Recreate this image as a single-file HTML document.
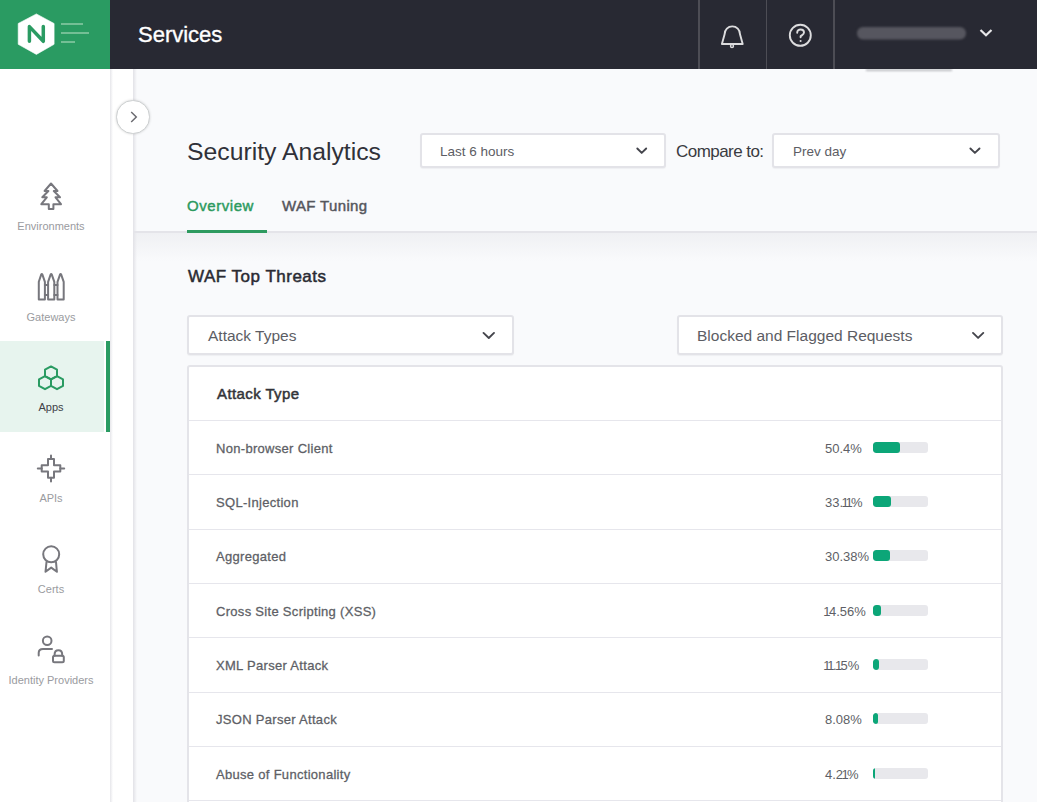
<!DOCTYPE html>
<html><head><meta charset="utf-8">
<style>
*{box-sizing:border-box;margin:0;padding:0}
html,body{width:1037px;height:802px;overflow:hidden;background:#f9fafc;font-family:"Liberation Sans",sans-serif}
.abs{position:absolute}
#hdr{left:0;top:0;width:1037px;height:69px;background:#282933}
#logo{left:0;top:0;width:110px;height:69px;background:#2a9b62}
.t{position:absolute;white-space:nowrap;line-height:1}
#side{left:0;top:69px;width:110px;height:733px;background:#fff}
#sideb{left:110px;top:69px;width:3px;height:733px;background:linear-gradient(90deg,#e6e6ea,#fff)}
#strip{left:113px;top:69px;width:20px;height:733px;background:#fff}
#content{left:133px;top:69px;width:904px;height:733px;background:#f9fafc}
#cshadow{left:133px;top:69px;width:4px;height:733px;background:linear-gradient(90deg,#e2e2e7,rgba(249,250,252,0))}
.nav{position:absolute;left:0;width:110px;height:91px}
.nav .lbl{position:absolute;left:0;width:102px;text-align:center;font-size:11px;color:#9a9ba0;line-height:1}
.dd{position:absolute;background:#fff;border:2px solid #e3e3e8;border-radius:3px;box-shadow:0 1px 1px rgba(40,40,60,0.05)}
.row{position:absolute;left:0;width:812px;height:54.5px;border-top:1.5px solid #e6e6ec}
.row .nm{position:absolute;left:27px;font-size:13px;letter-spacing:0.3px;color:#5e5f66;line-height:1;-webkit-text-stroke:0.28px #5e5f66}
.row .pc{position:absolute;left:636px;font-size:13px;color:#5e5f66;line-height:1}
.row .pc u{text-decoration:none;margin:0 -1.65px}
.row .bar{position:absolute;left:684px;width:55px;height:11px;border-radius:3px;background:#e8e8ec;overflow:hidden}
.row .bar i{display:block;height:11px;background:#0ca678;border-radius:3px}
</style></head><body>
<div id="hdr" class="abs"></div>
<div id="logo" class="abs">
<svg width="110" height="69" viewBox="0 0 110 69">
<path d="M36.4 13.9 L54.1 23.5 L54.1 44.3 L36.4 54.4 L18.2 44.3 L18.2 23.5 Z" fill="#fff" stroke="#fff" stroke-width="0.6" stroke-linejoin="round"/>
<path d="M29.4 41.3 V26.6 L43.3 41.3 V26.6" fill="none" stroke="#2a9b62" stroke-width="3.5" stroke-linecap="round" stroke-linejoin="round"/>
<g stroke="#94cfad" stroke-width="1.4">
<line x1="61" y1="24" x2="83" y2="24"/>
<line x1="61" y1="33" x2="89" y2="33"/>
<line x1="61" y1="42" x2="75" y2="42"/>
</g>
</svg>
</div>
<div class="t" style="left:138px;top:24px;font-size:22px;color:#fff;-webkit-text-stroke:0.35px #fff">Services</div>
<div class="abs" style="left:698px;top:0;width:1.5px;height:69px;background:#4d4d55"></div>
<div class="abs" style="left:765.5px;top:0;width:1.5px;height:69px;background:#4d4d55"></div>
<div class="abs" style="left:833px;top:0;width:1.5px;height:69px;background:#4d4d55"></div>
<svg class="abs" style="left:0;top:0" width="1037" height="69">
<path d="M721.9 44 L724.6 34.2 C724.6 29.6 728 26.4 732.3 26.4 C736.6 26.4 740 29.6 740 34.2 L742.7 44 Z" fill="none" stroke="#dcdcde" stroke-width="1.9" stroke-linejoin="round"/>
<circle cx="732" cy="46" r="1.5" fill="none" stroke="#dcdcde" stroke-width="1.4"/>
<circle cx="800.3" cy="35.3" r="10.5" fill="none" stroke="#dcdcde" stroke-width="1.9"/>
<path d="M797.2 32.7 C797.2 30.6 798.7 29.5 800.6 29.5 C802.5 29.5 804 30.7 804 32.5 C804 34.4 801.9 35.1 800.6 36.3 L800.6 37.2" fill="none" stroke="#dcdcde" stroke-width="1.9" stroke-linecap="round"/>
<circle cx="800.6" cy="41" r="1.05" fill="#dcdcde"/>
<rect x="857" y="27" width="109" height="12.5" rx="6" fill="#56565f" style="filter:blur(1px)"/>
<path d="M980.5 30 L986 35.3 L991.5 30" fill="none" stroke="#e6e6e8" stroke-width="2.2"/>
</svg>

<div id="side" class="abs"></div>
<div id="sideb" class="abs"></div>
<div id="strip" class="abs"></div>
<div id="content" class="abs"></div>

<div class="abs" style="left:866px;top:68.5px;width:86px;height:2px;background:rgba(40,40,50,0.3);filter:blur(0.8px)"></div>
<!-- nav -->
<div class="abs" style="left:0;top:341px;width:104px;height:91px;background:#e7f4ee"></div>
<div class="abs" style="left:106px;top:341px;width:4px;height:91px;background:#2a9b62"></div>
<svg class="abs" style="left:0;top:0" width="110" height="802">
<g fill="none" stroke="#77777d" stroke-width="2" stroke-linejoin="round" stroke-linecap="round">
<path d="M51 183.5 L57.5 191 L53.8 191 L60 197.3 L55.5 197.3 L61 204.2 L53.4 204.2 L53.4 209 L48.8 209 L48.8 204.2 L41.3 204.2 L46.8 197.3 L42.3 197.3 L48.4 191 L44.6 191 Z"/>
<path d="M38.8 281.8 L41.2 274.6 Q41.8 273.6 42.4 274.6 L44.9 281.8 L44.9 299.5 L38.8 299.5 Z"/>
<path d="M48.1 281.8 L50.6 274.6 Q51.2 273.6 51.8 274.6 L54.3 281.8 L54.3 299.5 L48.1 299.5 Z"/>
<path d="M57.5 281.8 L60 274.6 Q60.6 273.6 61.2 274.6 L63.7 281.8 L63.7 299.5 L57.5 299.5 Z"/>
<path d="M44.9 285 H48.1 M44.9 295 H48.1 M54.3 285 H57.5 M54.3 295 H57.5"/>
<path d="M48 459 H54 V465.3 H60.3 V471.5 H54 V477.8 H48 V471.5 H41.7 V465.3 H48 Z"/>
<path d="M51 455.5 V459 M51 477.8 V481.5 M37.8 468.4 H41.7 M60.3 468.4 H64.2"/>
<circle cx="51.2" cy="554.3" r="8"/>
<path d="M46.5 562 L45.5 571.8 L51.2 567.6 L56.9 571.8 L56 562"/>
<circle cx="47.2" cy="640.7" r="4.3"/>
<path d="M38.7 655.5 V653 C38.7 650.5 40.5 649 43 649 H52"/>
<rect x="53" y="655.8" width="10.8" height="6.4" rx="1.5"/>
<path d="M54.6 655.8 V654.6 C54.6 652 56.2 650.2 58.4 650.2 C60.6 650.2 62.2 652 62.2 654.6 V655.8"/>
</g>
<g fill="none" stroke="#2a9b62" stroke-width="2" stroke-linejoin="round" transform="translate(0,0.9)">
<path d="M51 365.5 L57 368.75 L57 375.25 L51 378.5 L45 375.25 L45 368.75 Z"/>
<path d="M45 375.25 L51 378.5 L51 385 L45 388.25 L39 385 L39 378.5 Z"/>
<path d="M57 375.25 L63 378.5 L63 385 L57 388.25 L51 385 L51 378.5 Z"/>
</g>
</svg>
<div class="nav" style="top:160px"><div class="lbl" style="top:60.8px">Environments</div></div>
<div class="nav" style="top:251px"><div class="lbl" style="top:60.8px">Gateways</div></div>
<div class="nav" style="top:341px"><div class="lbl" style="top:60.8px;color:#404147">Apps</div></div>
<div class="nav" style="top:432px"><div class="lbl" style="top:60.8px">APIs</div></div>
<div class="nav" style="top:523px"><div class="lbl" style="top:60.8px">Certs</div></div>
<div class="nav" style="top:614px"><div class="lbl" style="top:60.8px">Identity Providers</div></div>

<!-- page header -->
<div class="t" style="left:187px;top:140px;font-size:24.75px;color:#303139">Security Analytics</div>
<div class="dd" style="left:420px;top:133px;width:246px;height:35px"></div>
<div class="t" style="left:440px;top:145px;font-size:13.5px;color:#5c5d64">Last 6 hours</div>

<div class="t" style="left:676px;top:143px;font-size:17px;letter-spacing:-0.55px;color:#3a3b41">Compare to:</div>
<div class="dd" style="left:772px;top:133px;width:228px;height:35px"></div>
<div class="t" style="left:793px;top:145px;font-size:13.5px;color:#5c5d64">Prev day</div>

<div class="t" style="left:187px;top:198px;font-size:15px;letter-spacing:0.55px;-webkit-text-stroke:0.45px #2d9a5f;color:#2d9a5f">Overview</div>
<div class="t" style="left:282px;top:198px;font-size:15px;letter-spacing:0.35px;-webkit-text-stroke:0.45px #55565c;color:#55565c">WAF Tuning</div>
<div class="abs" style="left:133px;top:232.5px;width:904px;height:28px;background:linear-gradient(#eff0f3,#f9fafc)"></div>
<div id="cshadow" class="abs"></div>
<div class="abs" style="left:133px;top:231px;width:904px;height:1.5px;background:#e4e4e9"></div>
<div class="abs" style="left:187px;top:230px;width:80px;height:3px;background:#2d9a5f"></div>
<!-- toggle -->
<div class="abs" style="left:116px;top:100px;width:33.5px;height:33.5px;border-radius:50%;background:#fff;border:1px solid #cdd0d1;box-shadow:0 0 2.5px rgba(0,0,0,0.16)"></div>
<svg class="abs" style="left:0;top:0" width="160" height="140"><path d="M131.2 112 L136.3 116.9 L131.2 121.9" fill="none" stroke="#6a6a70" stroke-width="1.45"/></svg>



<div class="t" style="left:188px;top:268px;font-size:17px;letter-spacing:0.5px;-webkit-text-stroke:0.5px #2a2b33;color:#2a2b33">WAF Top Threats</div>
<div class="dd" style="left:187px;top:315px;width:327px;height:40px"></div>
<div class="t" style="left:208px;top:328px;font-size:15.5px;color:#5c5d64">Attack Types</div>
<div class="dd" style="left:677px;top:315px;width:326px;height:40px"></div>
<div class="t" style="left:697px;top:328px;font-size:15.5px;color:#5c5d64">Blocked and Flagged Requests</div>

<!-- table -->
<div class="abs" style="left:187px;top:364.5px;width:816px;height:440px;background:#fff;border:2px solid #e4e4e9;border-radius:3px">
<div class="t" style="left:28px;top:19.5px;font-size:15px;letter-spacing:0.4px;-webkit-text-stroke:0.5px #333439;color:#333439">Attack Type</div>
<div class="row" style="top:53.50px"><div class="nm" style="top:20.5px">Non-browser Client</div><div class="pc" style="top:20.5px">50.4%</div><div class="bar" style="top:20.5px"><i style="width:27px"></i></div></div>
<div class="row" style="top:107.85px"><div class="nm" style="top:20.5px">SQL-Injection</div><div class="pc" style="top:20.5px">33.<u>1</u><u>1</u>%</div><div class="bar" style="top:20.5px"><i style="width:18px"></i></div></div>
<div class="row" style="top:162.20px"><div class="nm" style="top:20.5px">Aggregated</div><div class="pc" style="top:20.5px">30.38%</div><div class="bar" style="top:20.5px"><i style="width:16.5px"></i></div></div>
<div class="row" style="top:216.55px"><div class="nm" style="top:20.5px">Cross Site Scripting (XSS)</div><div class="pc" style="top:20.5px"><u>1</u>4.56%</div><div class="bar" style="top:20.5px"><i style="width:8px"></i></div></div>
<div class="row" style="top:270.90px"><div class="nm" style="top:20.5px">XML Parser Attack</div><div class="pc" style="top:20.5px"><u>1</u><u>1</u>.<u>1</u>5%</div><div class="bar" style="top:20.5px"><i style="width:6px"></i></div></div>
<div class="row" style="top:325.25px"><div class="nm" style="top:20.5px">JSON Parser Attack</div><div class="pc" style="top:20.5px">8.08%</div><div class="bar" style="top:20.5px"><i style="width:4.5px"></i></div></div>
<div class="row" style="top:433.95px"></div>
<div class="row" style="top:379.60px"><div class="nm" style="top:20.5px">Abuse of Functionality</div><div class="pc" style="top:20.5px">4.2<u>1</u>%</div><div class="bar" style="top:20.5px"><i style="width:2.3px"></i></div></div>
</div>
<svg class="abs" style="left:0;top:0" width="1037" height="400">
<g fill="none" stroke="#44454c" stroke-width="1.9" stroke-linecap="round" stroke-linejoin="round">
<path d="M637.3 148.5 L641.7 152.9 L646.2 148.5"/>
<path d="M970.4 148.5 L974.9 152.9 L979.5 148.5"/>
<path d="M483.5 332.9 L488.8 338 L494 332.9"/>
<path d="M973 332.9 L978.1 337.9 L983.3 332.9"/>
</g>
</svg>
</body></html>
